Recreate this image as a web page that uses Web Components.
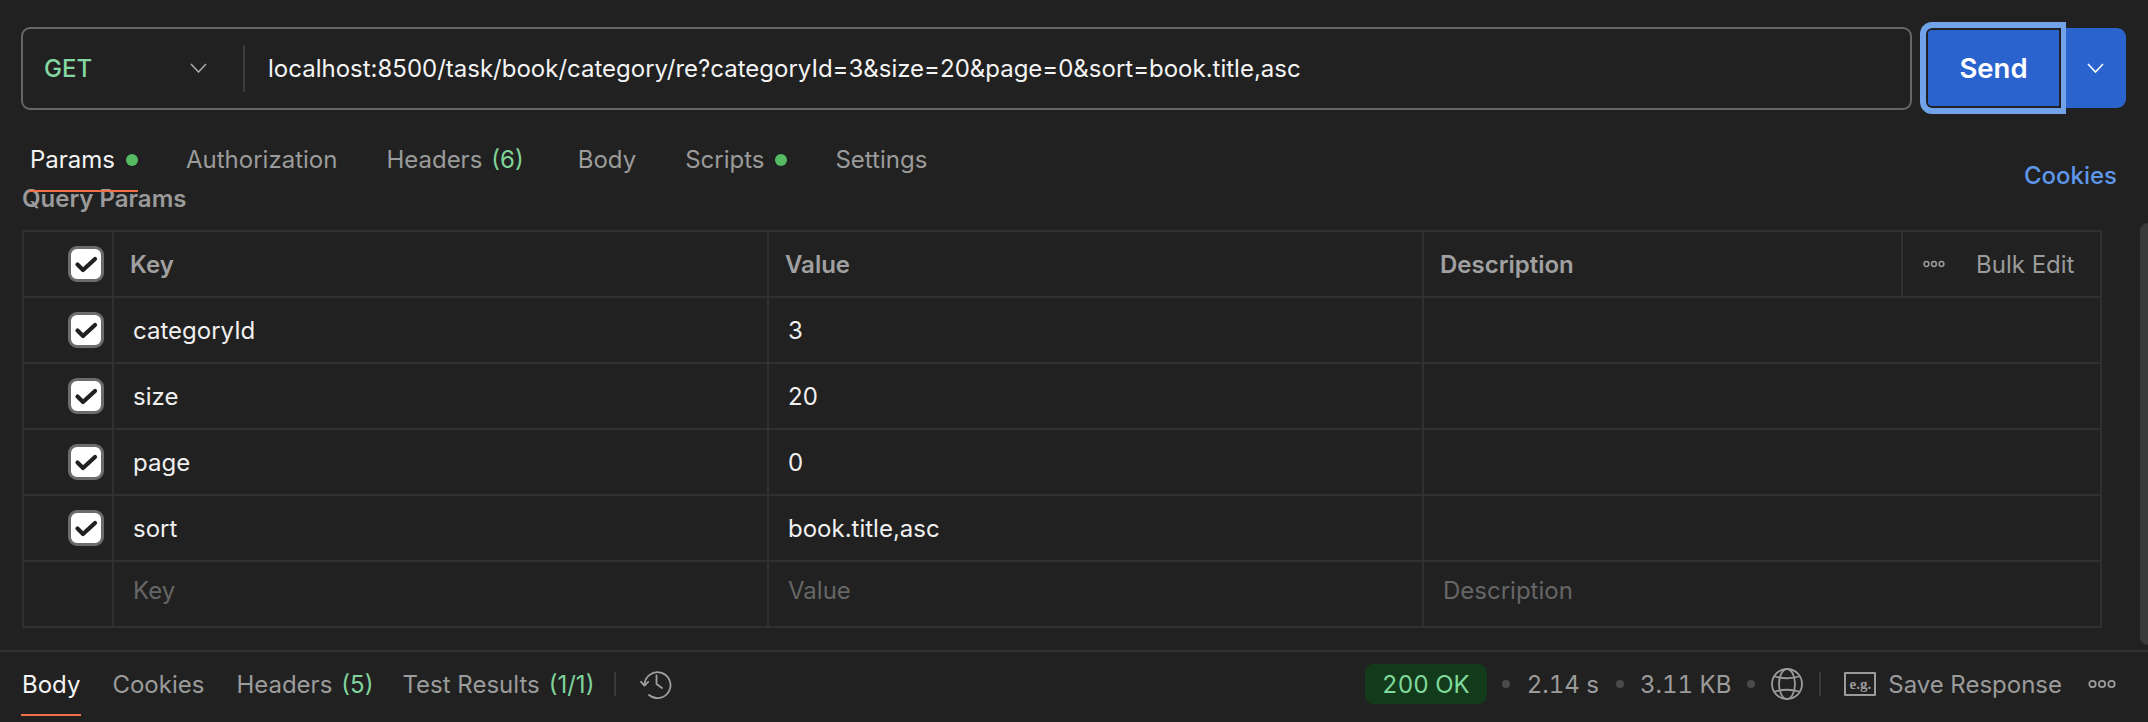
<!DOCTYPE html>
<html>
<head>
<meta charset="utf-8">
<title>Request</title>
<style>
  html, body { margin: 0; height: 100%; background: #212121; overflow: hidden; }
  body { font: 400 24px Inter, "Liberation Sans", sans-serif; color: #f2f2f2; }
</style>
</head>
<body>
<request-pane></request-pane>
<response-bar></response-bar>

<script>
// little helper so every element below stays short
function define(name, css, html) {
  class El extends HTMLElement {
    constructor() {
      super();
      this.attachShadow({ mode: 'open' }).innerHTML = '<style>' + css + '</style>' + html;
    }
  }
  customElements.define(name, El);
}

const CHEVRON = '<svg width="17" height="10" viewBox="0 0 17 10" fill="none" stroke="currentColor" stroke-width="1.6"><path d="M1 1l7.5 8L16 1"/></svg>';

define('send-button', `
  :host { display: flex; align-items: center; height: 92px; margin-left: 8px; }
  .send { box-sizing: border-box; width: 146px; height: 92px; display: flex; align-items: center; justify-content: center;
    background: #2b63ce; color: #fff; font-weight: 600; font-size: 27.5px;
    border: 6px solid #72a3ea; border-radius: 12px 0 0 12px; border-right-width: 5px; box-shadow: inset 0 0 0 2px #212121; }
  .more { box-sizing: border-box; width: 60px; height: 80px; display: flex; align-items: center; justify-content: center; padding-right: 2px;
    background: #2b63ce; color: #fff; border-radius: 0 9px 9px 0; }
`, `<div class="send">Send</div><div class="more">${CHEVRON}</div>`);

define('url-bar', `
  :host { display: flex; align-items: center; box-sizing: border-box; padding: 22px 22px 0 21px; }
  .box { flex: 1; box-sizing: border-box; height: 83px; display: flex; align-items: center;
    border: 2px solid #666; border-radius: 9px; }
  .method { width: 220px; box-sizing: border-box; padding-left: 21px; padding-right: 36px; display: flex; justify-content: space-between; align-items: center;
    color: #84d7a0; font-size: 24px; font-weight: 500; }
  .method svg { color: #a8a8a8; }
  .sep { width: 2px; height: 47px; background: #3c3c3c; }
  .url { padding-left: 23px; font-size: 24px; color: #f4f4f4; white-space: nowrap; }
`, `<div class="box">
    <div class="method"><span>GET</span>${CHEVRON}</div>
    <div class="sep"></div>
    <div class="url">localhost:8500/task/book/category/re?categoryId=3&amp;size=20&amp;page=0&amp;sort=book.title,asc</div>
  </div>
  <send-button></send-button>`);

// one tab: slot is the label, count/dot come from attributes
class TabItem extends HTMLElement {
  constructor() {
    super();
    const active = this.hasAttribute('active');
    const count = this.getAttribute('count');
    const dot = this.hasAttribute('dot');
    this.attachShadow({ mode: 'open' }).innerHTML = `<style>
      :host { display: flex; align-items: center; position: relative; white-space: nowrap;
        color: ${active ? '#f4f4f4' : '#9b9b9b'}; }
      .count { color: #7fd39b; margin-left: 9px; }
      .dot { width: 12px; height: 12px; border-radius: 50%; background: #55bb62; margin-left: 11px; margin-right: -1px; }
      .line { display: ${active ? 'block' : 'none'}; position: absolute; left: -1px; right: -1px; bottom: 0; height: 2px; background: #ef7145; }
    </style><slot></slot>${count ? `<span class="count">${count}</span>` : ''}${dot ? '<span class="dot"></span>' : ''}<span class="line"></span>`;
  }
}
customElements.define('tab-item', TabItem);

define('request-tabs', `
  :host { display: flex; align-items: stretch; height: 78px; box-sizing: border-box; padding: 13px 31px 0 30px; position: relative; z-index: 1; gap: 49px; }
  .cookies { margin-left: auto; align-self: center; margin-top: 31px; color: #5e97ea; font-weight: 500; }
`, `<slot></slot><span class="cookies">Cookies</span>`);

define('check-box', `
  :host { display: block; width: 36px; height: 36px; box-sizing: border-box; background: #fff; border: 3px solid #6c6c6c; border-radius: 9px; }
  svg { display: block; width: 30px; height: 30px; }
`, `<svg viewBox="0 0 30 30" fill="none" stroke="#212121" stroke-width="4.2" stroke-linecap="round" stroke-linejoin="round"><path d="M6.5 15.5 12 21 24 10"/></svg>`);

// columns live in --cols on the table
define('param-row', `
  :host { display: grid; grid-template-columns: var(--cols); height: 66px; box-sizing: border-box; border-top: 2px solid #303030; }
  ::slotted(*) { display: flex; align-items: center; box-sizing: border-box; border-left: 2px solid #303030; min-width: 0; }
  ::slotted(:first-child) { border-left: 0; justify-content: flex-end; padding-right: 8px; }
`, `<slot></slot>`);

define('cell-text', `
  :host { padding-left: 19px; white-space: nowrap; color: #f0f0f0; }
  :host([head]) { padding-left: 16px; font-weight: 600; color: #a0a0a0; }
  :host([ghost]) { color: #666; padding-bottom: 8px; }
`, `<slot></slot>`);

define('bulk-edit', `
  :host { padding-left: 20px; color: #9b9b9b; gap: 31px; }
  svg { display: block; }
`, `<svg width="22" height="8" viewBox="0 0 22 8" fill="none" stroke="#9b9b9b" stroke-width="1.5"><circle cx="3.5" cy="4" r="2.4"/><circle cx="11" cy="4" r="2.4"/><circle cx="18.5" cy="4" r="2.4"/></svg><slot></slot>`);

define('params-table', `
  :host { display: block; box-sizing: border-box; width: 2080px; margin-left: 22px;
    border: 2px solid #303030; border-top: 0; --cols: 88px 655px 655px 479px 1fr; }
`, `<slot></slot>`);

define('scroll-thumb', `
  :host { display: block; position: absolute; right: 0; top: 223px; width: 8px; height: 422px; background: #3a3a3a; border-radius: 8px 0 0 8px; }
`, ``);

define('request-pane', `
  :host { display: block; position: relative; height: 650px; overflow: hidden; }
  .query { box-sizing: border-box; height: 38px; padding-left: 22px; line-height: 14px; font-weight: 600; color: #9a9a9a; }
`, `
  <url-bar></url-bar>
  <request-tabs>
    <tab-item active dot>Params</tab-item>
    <tab-item>Authorization</tab-item>
    <tab-item count="(6)" style="margin-right:5px">Headers</tab-item>
    <tab-item>Body</tab-item>
    <tab-item dot>Scripts</tab-item>
    <tab-item>Settings</tab-item>
  </request-tabs>
  <div class="query">Query Params</div>
  <params-table>
    <param-row>
      <div><check-box></check-box></div>
      <cell-text head>Key</cell-text><cell-text head>Value</cell-text><cell-text head>Description</cell-text>
      <bulk-edit>Bulk Edit</bulk-edit>
    </param-row>
    <param-row>
      <div><check-box></check-box></div>
      <cell-text>categoryId</cell-text><cell-text>3</cell-text>
      <cell-text style="grid-column: span 2"></cell-text>
    </param-row>
    <param-row>
      <div><check-box></check-box></div>
      <cell-text>size</cell-text><cell-text>20</cell-text>
      <cell-text style="grid-column: span 2"></cell-text>
    </param-row>
    <param-row>
      <div><check-box></check-box></div>
      <cell-text>page</cell-text><cell-text>0</cell-text>
      <cell-text style="grid-column: span 2"></cell-text>
    </param-row>
    <param-row>
      <div><check-box></check-box></div>
      <cell-text>sort</cell-text><cell-text>book.title,asc</cell-text>
      <cell-text style="grid-column: span 2"></cell-text>
    </param-row>
    <param-row>
      <div></div>
      <cell-text ghost>Key</cell-text><cell-text ghost>Value</cell-text>
      <cell-text ghost style="grid-column: span 2">Description</cell-text>
    </param-row>
  </params-table>
  <scroll-thumb></scroll-thumb>
`);

define('status-dot', `
  :host { display: block; width: 8px; height: 8px; border-radius: 50%; background: #4a4a4a; margin: 0 16px; }
`, ``);

define('response-bar', `
  :host { display: flex; align-items: stretch; height: 72px; box-sizing: border-box; border-top: 2px solid #303030; padding: 0 32px 6px 22px; }
  .tabs { display: flex; align-items: stretch; gap: 32px; }
  .sep { width: 2px; height: 24px; background: #3a3a3a; align-self: center; }
  .left-sep { margin-left: 20px; }
  .history { align-self: center; margin-left: 24px; color: #a0a0a0; display: block; }
  .right { margin-left: auto; display: flex; align-items: center; color: #9b9b9b; white-space: nowrap; font-variant-numeric: tabular-nums; }
  .badge { display: flex; align-items: center; height: 40px; box-sizing: border-box; padding: 0 17px; background: #133a1b; color: #7fd99a; border-radius: 8px; }
  .globe { display: block; }
  .right .sep { margin: 0 23px 0 16px; }
  .eg { box-sizing: border-box; width: 32px; height: 24px; border: 2px solid #9b9b9b; display: flex; align-items: center; justify-content: center;
    font: 700 15px "Liberation Serif", serif; margin-right: 12px; border-radius: 1px; }
  .more { display: block; margin-left: 26px; }
`, `
  <div class="tabs">
    <tab-item active>Body</tab-item>
    <tab-item>Cookies</tab-item>
    <tab-item count="(5)">Headers</tab-item>
    <tab-item count="(1/1)" style="margin-left:-3px">Test Results</tab-item>
  </div>
  <div class="sep left-sep"></div>
  <svg class="history" width="32" height="30" viewBox="0 0 32 30" fill="none" stroke="currentColor" stroke-width="1.8" stroke-linecap="round" stroke-linejoin="round">
    <path d="M4.5 16A13 13 0 1 1 9 26"/><path d="M1 12.8 4.5 16.6 8.2 12.8"/><path d="M16.5 6.5V15l5.5 4"/>
  </svg>
  <div class="right">
    <span class="badge">200 OK</span>
    <status-dot style="margin-left:15px;margin-right:17px"></status-dot><span>2.14 s</span>
    <status-dot style="margin-right:16px;margin-left:17px"></status-dot><span>3.11 KB</span>
    <status-dot></status-dot>
    <svg class="globe" width="32" height="32" viewBox="0 0 32 32" fill="none" stroke="#9b9b9b" stroke-width="1.8">
      <circle cx="16" cy="16" r="15"/><ellipse cx="16" cy="16" rx="8" ry="15"/><path d="M4 8.5q12 3.5 24 0M4 23.5q12-3.5 24 0"/>
    </svg>
    <div class="sep"></div>
    <span class="eg">e.g.</span>
    <span>Save Response</span>
    <svg class="more" width="28" height="10" viewBox="0 0 28 10" fill="none" stroke="#9b9b9b" stroke-width="1.8"><circle cx="4.5" cy="5" r="3.2"/><circle cx="14" cy="5" r="3.2"/><circle cx="23.5" cy="5" r="3.2"/></svg>
  </div>
`);
</script>
</body>
</html>
